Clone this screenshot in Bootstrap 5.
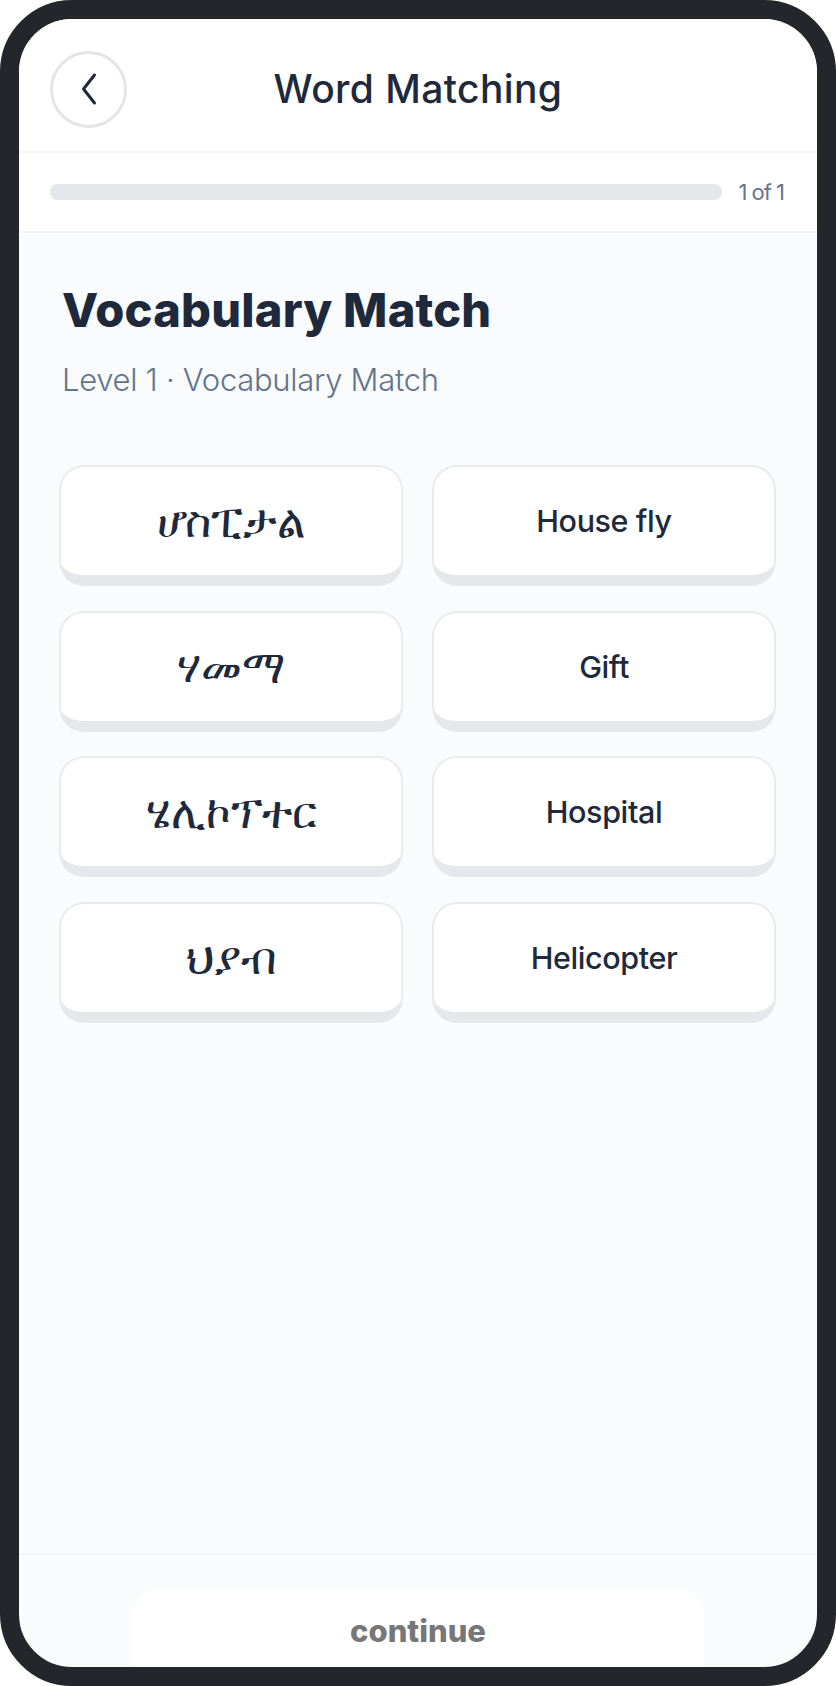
<!DOCTYPE html>
<html lang="en">
<head>
    <meta charset="UTF-8">
    <meta name="viewport" content="width=device-width, initial-scale=1.0">
    <title>Word Matching</title>
    <link href="https://cdn.jsdelivr.net/npm/bootstrap@5.3.0/dist/css/bootstrap.min.css" rel="stylesheet">
    <style>
        html, body { height: 100%; }
        body { background: #fff; font-family: "Inter", "Noto Sans", "DejaVu Sans", sans-serif; color: #1e293b; }
        .phone-frame {
            height: 1686px;
            border: 19px solid #25262b;
            border-radius: 72px;
            overflow: hidden;
            background: #f9fbfd;
        }
        .top-bar { height: 134px; padding: 0 31px; border-bottom: 2px solid #f3f4f6; }
        .back-btn { width: 77px; height: 77px; border: 3px solid #e5e5e5; border-radius: 50%; background: #fff; margin-top: 8px; }
        .page-title { font-size: 39px; font-weight: 500; letter-spacing: 0.4px; line-height: 1; margin-top: 3px; }
        .progress-row { height: 80px; padding: 0 33px 0 31px; border-bottom: 2px solid #f1f3f5; }
        .progress-track { height: 16px; border-radius: 8px; background: #e5e7eb; }
        .progress-count { font-size: 22px; color: #64748b; letter-spacing: -1px; margin-left: 16px; }
        .lesson-head { padding: 49px 44px 0 43px; }
        .lesson-title { font-size: 47px; font-weight: 800; letter-spacing: 0.2px; line-height: 1.2; margin: 0; }
        .lesson-sub { font-size: 31px; font-weight: 300; color: #64748b; letter-spacing: -0.3px; line-height: 1.2; margin: 23px 0 0; }
        .match-grid { display: grid; grid-template-columns: 344px 344px; column-gap: 29px; row-gap: 24.6px; padding: 66.4px 40px 0; }
        .match-tile {
            height: 121px;
            background: #fff;
            border: 2px solid #e9ebef;
            border-bottom: 11px solid #e5e7eb;
            border-radius: 25px;
            color: #1e293b;
            font-size: 30.5px;
            font-weight: 500;
            letter-spacing: -0.4px;
        }
        .geez { font-size: 45px; font-weight: 400; letter-spacing: 0; }
        .bottom-bar { height: 114px; padding-top: 34px; border-top: 2px solid #f3f4f6; }
        .continue-btn {
            width: 572px;
            height: 100px;
            border: 0;
            border-radius: 26px;
            background: #fff;
            color: #777;
            font-size: 31px;
            font-weight: 800;
            letter-spacing: 0;
            padding: 0 0 15px;
            line-height: 1.45;
            display: block;
        }
    </style>
</head>
<body>
    <div class="phone-frame d-flex flex-column">
        <header class="top-bar bg-white d-flex align-items-center position-relative flex-shrink-0">
            <button class="back-btn d-flex align-items-center justify-content-center p-0" aria-label="Back">
                <svg width="24" height="34" viewBox="0 0 24 34" fill="none" stroke="#1e293b" stroke-width="3" stroke-linecap="round" stroke-linejoin="round"><path d="M17.5 3 L6.5 17 L17.5 31"/></svg>
            </button>
            <div class="page-title position-absolute top-50 start-50 translate-middle text-nowrap">Word Matching</div>
        </header>
        <div class="progress-row bg-white d-flex align-items-center flex-shrink-0">
            <div class="progress-track flex-grow-1"></div>
            <div class="progress-count">1 of 1</div>
        </div>
        <main class="flex-grow-1">
            <div class="lesson-head">
                <h1 class="lesson-title">Vocabulary Match</h1>
                <p class="lesson-sub">Level 1 · Vocabulary Match</p>
            </div>
            <div class="match-grid">
                <button class="match-tile geez d-flex align-items-center justify-content-center">ሆስፒታል</button>
                <button class="match-tile d-flex align-items-center justify-content-center">House fly</button>
                <button class="match-tile geez d-flex align-items-center justify-content-center">ሃመማ</button>
                <button class="match-tile d-flex align-items-center justify-content-center">Gift</button>
                <button class="match-tile geez d-flex align-items-center justify-content-center">ሄሊኮፕተር</button>
                <button class="match-tile d-flex align-items-center justify-content-center">Hospital</button>
                <button class="match-tile geez d-flex align-items-center justify-content-center">ህያብ</button>
                <button class="match-tile d-flex align-items-center justify-content-center">Helicopter</button>
            </div>
        </main>
        <footer class="bottom-bar flex-shrink-0">
            <button class="continue-btn mx-auto text-center">continue</button>
        </footer>
    </div>
    <script src="https://cdn.jsdelivr.net/npm/bootstrap@5.3.0/dist/js/bootstrap.bundle.min.js"></script>
</body>
</html>
